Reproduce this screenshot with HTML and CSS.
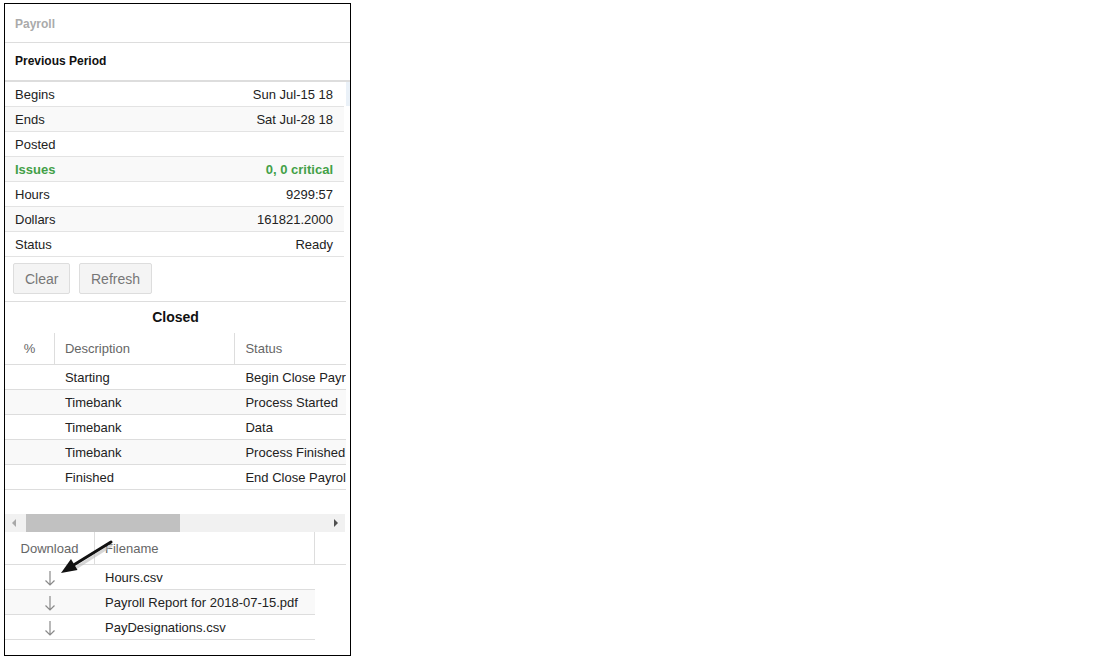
FILE: index.html
```html
<!DOCTYPE html>
<html>
<head>
<meta charset="utf-8">
<link rel="stylesheet" href="styles.css">
</head>
<body>
<div class="panel">
  <div class="title">Payroll</div>
  <div class="section">Previous Period</div>
  <div class="body">
    <div class="content">
      <div class="kv">
        <div class="kv-row"><span>Begins</span><span>Sun Jul-15 18</span></div>
        <div class="kv-row alt"><span>Ends</span><span>Sat Jul-28 18</span></div>
        <div class="kv-row"><span>Posted</span><span></span></div>
        <div class="kv-row alt issues"><span>Issues</span><span>0, 0 critical</span></div>
        <div class="kv-row"><span>Hours</span><span>9299:57</span></div>
        <div class="kv-row alt"><span>Dollars</span><span>161821.2000</span></div>
        <div class="kv-row"><span>Status</span><span>Ready</span></div>
      </div>
      <div class="buttons">
        <button class="btn btn-clear">Clear</button>
        <button class="btn btn-refresh">Refresh</button>
      </div>
      <div class="closed">Closed</div>
      <div class="grid-wrap">
        <div class="grid">
          <div class="g-head">
            <div class="c1">%</div>
            <div class="c2 sep">Description</div>
            <div class="c3 sep">Status</div>
          </div>
          <div class="g-row"><div class="c1"></div><div class="c2">Starting</div><div class="c3">Begin Close Payroll</div></div>
          <div class="g-row alt"><div class="c1"></div><div class="c2">Timebank</div><div class="c3">Process Started</div></div>
          <div class="g-row"><div class="c1"></div><div class="c2">Timebank</div><div class="c3">Data</div></div>
          <div class="g-row alt"><div class="c1"></div><div class="c2">Timebank</div><div class="c3">Process Finished</div></div>
          <div class="g-row"><div class="c1"></div><div class="c2">Finished</div><div class="c3">End Close Payroll</div></div>
        </div>
      </div>
      <div class="hscroll">
        <div class="arrow-left"></div>
        <div class="thumb"></div>
        <div class="track-fill"></div>
        <div class="arrow-right"></div>
      </div>
      <div class="dl">
        <div class="dl-head">
          <div class="d1">Download</div>
          <div class="d2">Filename</div>
        </div>
        <div class="dl-row">
          <div class="d1"><svg class="down" viewBox="0 0 12 16" width="12" height="16"><path d="M6 1V15M1.5 10.5L6 15L10.5 10.5" fill="none" stroke="#8a8a8a" stroke-width="1.2"/></svg></div>
          <div class="d2">Hours.csv</div>
        </div>
        <div class="dl-row alt">
          <div class="d1"><svg class="down" viewBox="0 0 12 16" width="12" height="16"><path d="M6 1V15M1.5 10.5L6 15L10.5 10.5" fill="none" stroke="#8a8a8a" stroke-width="1.2"/></svg></div>
          <div class="d2">Payroll Report for 2018-07-15.pdf</div>
        </div>
        <div class="dl-row">
          <div class="d1"><svg class="down" viewBox="0 0 12 16" width="12" height="16"><path d="M6 1V15M1.5 10.5L6 15L10.5 10.5" fill="none" stroke="#8a8a8a" stroke-width="1.2"/></svg></div>
          <div class="d2">PayDesignations.csv</div>
        </div>
      </div>
    </div>
    <div class="vtrack"><div class="vthumb"></div></div>
  </div>
</div>
<svg class="annot" width="1098" height="660" viewBox="0 0 1098 660">
  <path d="M111 543L73 567" stroke="#bbb" stroke-width="3" transform="translate(1,2)" opacity="0.6"/>
  <path d="M111 542L72 566" stroke="#111" stroke-width="3" stroke-linecap="round"/>
  <path d="M61 573L71 559L77.5 570Z" fill="#111"/>
</svg>
</body>
</html>
```

FILE: styles.css
```css
body {
  margin: 0;
  background: #fff;
  font-family: "Liberation Sans", Arial, sans-serif;
  color: #222;
}

.panel {
  margin: 3px 0 0 4px;
  width: 345px;
  height: 651px;
  border: 1px solid #000;
  overflow: hidden;
  background: #fff;
}

.title {
  height: 37px;
  padding-top: 1px;
  line-height: 38px;
  padding-left: 10px;
  font-size: 12px;
  font-weight: bold;
  color: #aaa;
  border-bottom: 1px solid #ddd;
}

.section {
  height: 37px;
  line-height: 37px;
  padding-left: 10px;
  font-size: 12px;
  font-weight: bold;
  color: #111;
  border-bottom: 2px solid #ddd;
}

.body {
  display: flex;
}

.content {
  width: 341px;
  flex: none;
}

.vtrack {
  width: 4px;
  flex: none;
}

.vthumb {
  height: 24px;
  background: #eaf1f8;
}

.kv {
  width: 339px;
}

.kv-row {
  display: flex;
  justify-content: space-between;
  height: 24px;
  line-height: 26px;
  padding: 0 11px 0 10px;
  font-size: 13px;
  border-bottom: 1px solid #e3e3e3;
  overflow: hidden;
}

.alt {
  background: #f9f9f9;
}

.issues {
  color: #43a047;
  font-weight: bold;
}

.buttons {
  display: flex;
  gap: 9px;
  padding: 6px 0 7px 8px;
  border-bottom: 1px solid #ddd;
}

.btn {
  height: 31px;
  padding: 0 11px;
  font-family: "Liberation Sans", Arial, sans-serif;
  font-size: 14px;
  color: #777;
  background: #f4f4f4;
  border: 1px solid #ddd;
  border-radius: 2px;
}

.btn-clear {
  width: 57px;
}

.btn-refresh {
  width: 73px;
}

.closed {
  height: 31px;
  line-height: 30px;
  text-align: center;
  font-size: 14px;
  font-weight: bold;
  color: #111;
}

.grid-wrap {
  width: 341px;
  overflow: hidden;
}

.grid {
  width: 420px;
  font-size: 13px;
}

.g-head,
.g-row {
  display: flex;
  border-bottom: 1px solid #ddd;
}

.g-head {
  height: 31px;
  line-height: 31px;
  color: #666;
}

.g-row {
  height: 24px;
  line-height: 25px;
}

.g-head .c1 {
  text-align: center;
}

.c1 {
  width: 49px;
}

.c2 {
  width: 170px;
  padding-left: 10px;
}

.c3 {
  width: 180px;
  padding-left: 10px;
  white-space: nowrap;
}

.sep {
  border-left: 1px solid #ddd;
}

.g-row .c2,
.g-row .c3 {
  border-left: 1px solid transparent;
}

.hscroll {
  margin-top: 24px;
  height: 18px;
  width: 340px;
  background: #f1f1f1;
  display: flex;
  align-items: center;
}

.arrow-left {
  width: 0;
  height: 0;
  margin-left: 7px;
  border-top: 4px solid transparent;
  border-bottom: 4px solid transparent;
  border-right: 4px solid #a8a8a8;
}

.thumb {
  margin-left: 10px;
  width: 154px;
  height: 18px;
  background: #c1c1c1;
}

.track-fill {
  flex: 1;
}

.arrow-right {
  width: 0;
  height: 0;
  margin-right: 7px;
  border-top: 4px solid transparent;
  border-bottom: 4px solid transparent;
  border-left: 4px solid #505050;
}

.dl {
  font-size: 13px;
}

.dl-head {
  display: flex;
  height: 32px;
  line-height: 34px;
  color: #666;
  border-bottom: 1px solid #ddd;
}

.dl-head .d1 {
  border-right: 1px solid #ddd;
}

.dl-head .d2 {
  border-right: 1px solid #ddd;
}

.d1 {
  width: 89px;
  text-align: center;
}

.d2 {
  width: 209px;
  padding-left: 10px;
}

.dl-row {
  display: flex;
  width: 310px;
  height: 24px;
  line-height: 25px;
  border-bottom: 1px solid #ddd;
}

.dl-row .d1 {
  width: 90px;
  display: flex;
  align-items: center;
  justify-content: center;
}

.down {
  display: block;
  margin-top: 1px;
}

.annot {
  position: absolute;
  left: 0;
  top: 0;
  pointer-events: none;
}
```
